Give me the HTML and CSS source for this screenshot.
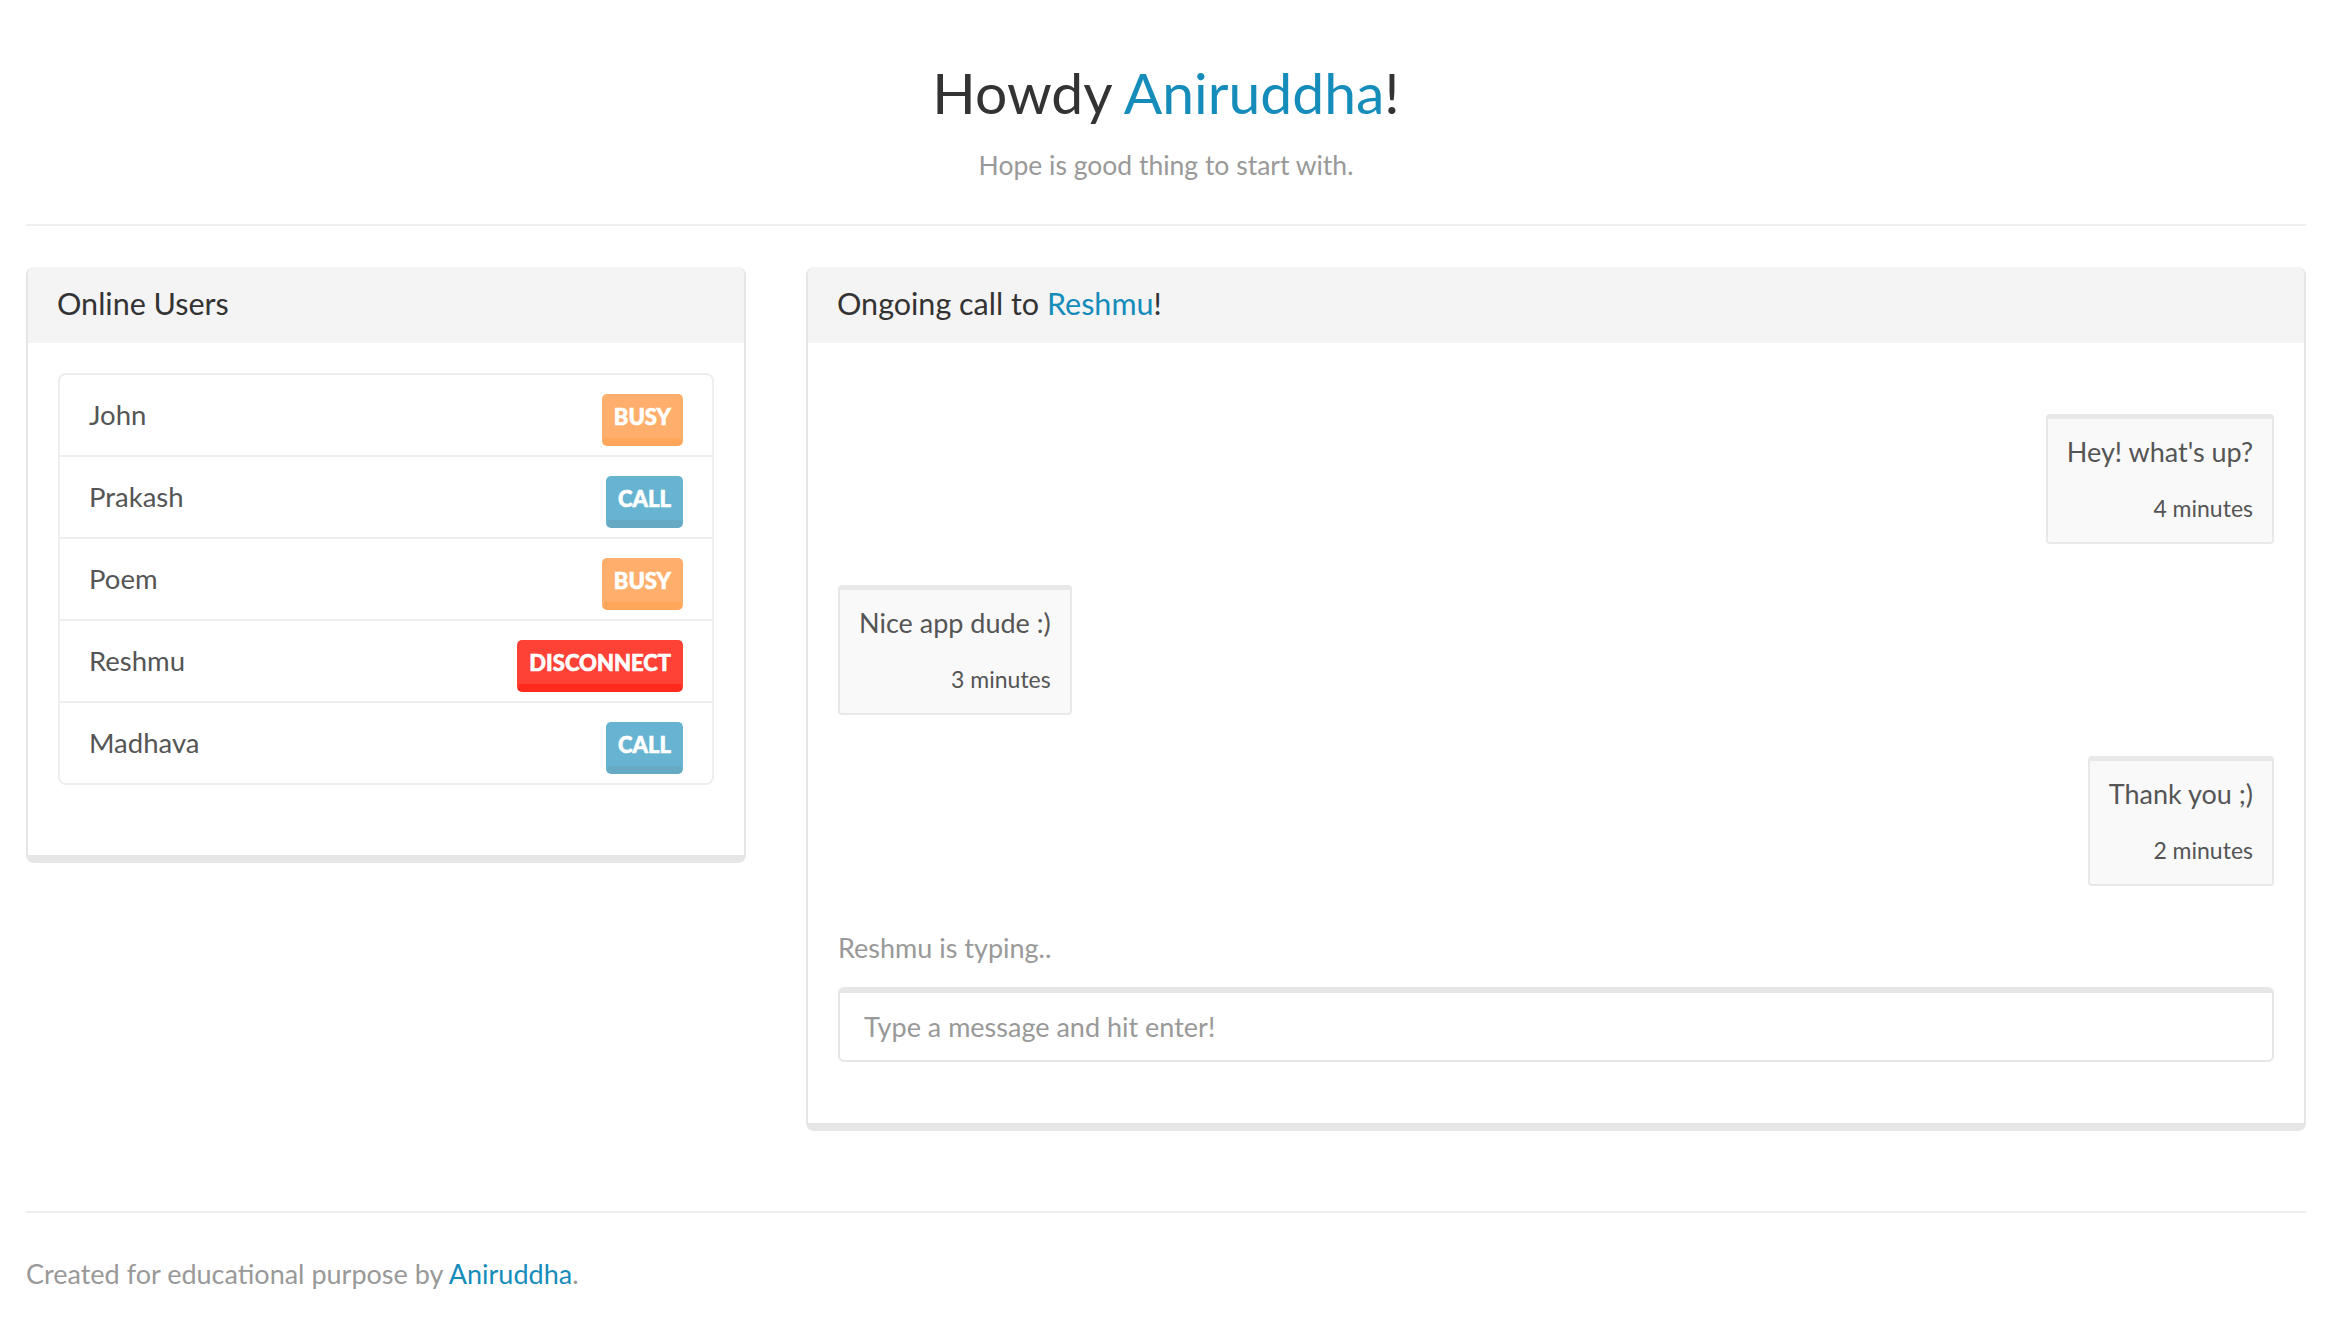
FILE: index.html
```html
<!DOCTYPE html>
<html lang="en">
<head>
<meta charset="utf-8">
<title>Howdy Aniruddha!</title>
<link rel="stylesheet" href="styles.css">
</head>
<body>
<div class="container">
  <header class="page-header">
    <h2 class="title">Howdy <a class="link" href="#">Aniruddha</a>!</h2>
    <p class="subtitle">Hope is good thing to start with.</p>
  </header>

  <main class="row">
    <section class="panel users">
      <div class="panel-heading">Online Users</div>
      <div class="panel-body">
        <ul class="list-group">
          <li class="list-item"><span class="name">John</span><button class="btn btn-busy">Busy</button></li>
          <li class="list-item"><span class="name">Prakash</span><button class="btn btn-call">Call</button></li>
          <li class="list-item"><span class="name">Poem</span><button class="btn btn-busy">Busy</button></li>
          <li class="list-item"><span class="name">Reshmu</span><button class="btn btn-disconnect">Disconnect</button></li>
          <li class="list-item"><span class="name">Madhava</span><button class="btn btn-call">Call</button></li>
        </ul>
      </div>
    </section>

    <section class="panel chat">
      <div class="panel-heading">Ongoing call to <a class="link" href="#">Reshmu</a>!</div>
      <div class="panel-body">
        <div class="messages">
          <div class="msg msg-right"><p class="msg-text">Hey! what's up?</p><small class="msg-time">4 minutes</small></div>
          <div class="msg msg-left"><p class="msg-text">Nice app dude :)</p><small class="msg-time">3 minutes</small></div>
          <div class="msg msg-right"><p class="msg-text">Thank you ;)</p><small class="msg-time">2 minutes</small></div>
        </div>
        <p class="typing">Reshmu is typing..</p>
        <input class="form-control" type="text" placeholder="Type a message and hit enter!">
      </div>
    </section>
  </main>

  <footer class="footer">Created for educational purpose by <a class="link" href="#">Aniruddha</a>.</footer>
</div>
</body>
</html>
```

FILE: styles.css
```css
* { box-sizing: border-box; }

html, body {
  margin: 0;
  padding: 0;
  background: #ffffff;
}

body {
  font-family: Lato, "Open Sans", sans-serif;
  font-size: 27px;
  line-height: 40px;
  color: #555555;
}

.container {
  padding: 0 32px 40px 26px;
}

.link {
  color: #158cba;
  text-decoration: none;
}

/* header */
.page-header {
  text-align: center;
  padding-top: 57px;
  padding-bottom: 39px;
  border-bottom: 2px solid #eeeeee;
}

.title {
  margin: 0;
  font-size: 57px;
  line-height: 70px;
  font-weight: 400;
  color: #333333;
}

.subtitle {
  margin: 18px 0 0;
  font-size: 26.5px;
  line-height: 40px;
  color: #999999;
}

/* columns */
.row {
  display: grid;
  grid-template-columns: 720px 1fr;
  column-gap: 60px;
  align-items: start;
  margin-top: 41px;
}

/* panels */
.panel {
  background: #ffffff;
  border: 2px solid #e6e6e6;
  border-top: 0;
  border-bottom-width: 8px;
  border-radius: 8px;
  overflow: hidden;
}

.panel-heading {
  background: #f4f4f4;
  padding: 18px 29px 22px;
  font-size: 30.5px;
  line-height: 36px;
  color: #333333;
}

.panel-body {
  padding: 30px;
}

/* users list */
.list-group {
  list-style: none;
  margin: 0 0 40px;
  padding: 0;
  border: 2px solid #eeeeee;
  border-radius: 8px;
}

.list-item {
  display: flex;
  align-items: center;
  justify-content: space-between;
  height: 82px;
  padding: 0 29px 0 29px;
  border-top: 2px solid #eeeeee;
}

.list-item:first-child {
  height: 80px;
  border-top: 0;
}

.name {
  color: #555555;
  font-size: 27.5px;
}

.btn {
  font-family: Lato, sans-serif;
  font-weight: 900;
  font-size: 22px;
  line-height: 42px;
  height: 52px;
  padding: 0 10px;
  margin-top: 9px;
  text-transform: uppercase;
  color: #ffffff;
  -webkit-text-stroke: 0.6px #ffffff;
  border: 2px solid transparent;
  border-bottom-width: 8px;
  border-radius: 5px;
  cursor: pointer;
}

.btn-busy {
  background: #ffaf6b;
  border-color: #ffaf6b;
  border-bottom-color: #ffa65a;
}

.btn-call {
  background: #67b4d2;
  border-color: #67b4d2;
  border-bottom-color: #65a9c3;
}

.btn-disconnect {
  background: #ff4136;
  border-color: #ff4136;
  border-bottom-color: #ff291c;
}

/* chat */
.messages {
  display: flex;
  flex-direction: column;
}

.msg {
  margin-top: 41px;
  padding: 13px 19px 17px;
  background: #f9f9f9;
  border: 2px solid #e8e8e8;
  border-top-width: 5px;
  border-radius: 4px;
  display: flex;
  flex-direction: column;
}

.msg-right { align-self: flex-end; }
.msg-left { align-self: flex-start; }

.msg-text {
  margin: 0 0 19px;
  font-size: 27px;
  line-height: 40px;
  color: #555555;
}

.msg-time {
  text-align: right;
  font-size: 23px;
  line-height: 34px;
  color: #555555;
}

.typing {
  margin: 42px 0 19px;
  color: #999999;
}

.form-control {
  display: block;
  width: 100%;
  height: 75px;
  margin: 0 0 31px;
  padding: 0 24px 1px;
  font-family: Lato, sans-serif;
  font-size: 27px;
  color: #555555;
  background: #ffffff;
  border: 2px solid #e6e6e6;
  border-top-width: 6px;
  border-radius: 6px;
  outline: none;
}

.form-control::placeholder {
  color: #999999;
}

/* footer */
.footer {
  margin-top: 80px;
  padding-top: 41px;
  border-top: 2px solid #eeeeee;
  color: #999999;
}
```
